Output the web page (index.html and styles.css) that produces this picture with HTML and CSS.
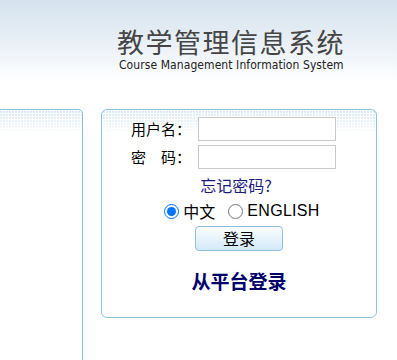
FILE: index.html
```html
<!DOCTYPE html>
<html lang="zh-CN">
<head>
<meta charset="utf-8">
<title>教学管理信息系统</title>
<link rel="stylesheet" href="styles.css">
</head>
<body>
<div class="page">
  <header class="top">
    <div class="brand">
      <div class="brand-cn">教学管理信息系统</div>
      <div class="brand-en">Course Management Information System</div>
    </div>
  </header>
  <main class="main">
    <div class="side"></div>
    <section class="login">
      <div class="fields">
        <label class="lbl">用户名：</label><input class="txt" type="text">
        <label class="lbl">密　码：</label><input class="txt" type="password">
      </div>
      <a class="forgot" href="#">忘记密码?</a>
      <div class="langs">
        <label class="lang"><input class="radio" type="radio" name="lang" checked>中文</label>
        <label class="lang"><input class="radio" type="radio" name="lang">ENGLISH</label>
      </div>
      <button class="btn" type="button">登录</button>
      <div class="platform">从平台登录</div>
    </section>
  </main>
</div>
</body>
</html>
```
FILE: styles.css
```css
html, body {
  margin: 0;
  padding: 0;
  background: #fff;
}
body {
  font-family: "Noto Sans CJK SC", "Liberation Sans", sans-serif;
  color: #000;
}
.page {
  width: 397px;
  height: 360px;
  overflow: hidden;
}
.top {
  height: 109px;
  box-sizing: border-box;
  padding: 26px 0 0 117px;
  background: linear-gradient(to bottom, #d5e3ee 0%, #e9f0f6 40%, #ffffff 75%);
}
.brand-cn {
  font-size: 27px;
  line-height: 31px;
  letter-spacing: 1.5px;
  color: #454545;
  white-space: nowrap;
}
.brand-en {
  font-family: "DejaVu Sans Condensed", "Liberation Sans", sans-serif;
  font-size: 12px;
  line-height: 14px;
  letter-spacing: 0.08px;
  color: #222;
  margin-top: 1px;
  margin-left: 2px;
  white-space: nowrap;
}
.main {
  display: flex;
  align-items: flex-start;
}
.side, .login {
  background:
    linear-gradient(to bottom, rgba(255,255,255,0) 0%, rgba(255,255,255,0.35) 35%, #fff 100%) 0 0 / 100% 24px no-repeat,
    repeating-linear-gradient(90deg, #fff 0 1px, transparent 1px 3px) 0 0 / 100% 24px no-repeat,
    repeating-linear-gradient(180deg, #fff 0 1px, transparent 1px 3px) 0 0 / 100% 24px no-repeat,
    linear-gradient(#d3eaf6, #d3eaf6) 0 0 / 100% 24px no-repeat,
    #fff;
}
.side {
  width: 93px;
  height: 260px;
  margin-left: -10px;
  box-sizing: border-box;
  border-top: 1px solid #86c6de;
  border-right: 1px solid #7ec3dd;
  border-top-right-radius: 5px;
}
.login {
  width: 276px;
  height: 209px;
  margin-left: 18px;
  box-sizing: border-box;
  border: 1px solid #8dc6dc;
  border-radius: 6px;
  display: flex;
  flex-direction: column;
  align-items: center;
  padding-top: 7px;
}
.fields {
  align-self: flex-start;
  margin-left: 29px;
  display: grid;
  grid-template-columns: 67px 138px;
  row-gap: 4px;
}
.lbl {
  font-size: 15px;
  line-height: 24px;
  white-space: nowrap;
}
.txt {
  width: 138px;
  height: 24px;
  box-sizing: border-box;
  margin: 0;
  padding: 0 3px;
  border: 1px solid #c9c9c9;
  background: #fff;
}
.forgot {
  margin-top: 6px;
  margin-left: -6px;
  font-size: 16px;
  line-height: 20px;
  color: #1d1a7c;
  text-decoration: none;
}
.langs {
  display: flex;
  align-items: center;
  gap: 13px;
  margin-top: 6px;
  margin-left: 6px;
  font-size: 16px;
  line-height: 20px;
}
.lang {
  display: flex;
  align-items: center;
}
.lang:last-child {
  font-family: "Liberation Sans", sans-serif;
  letter-spacing: 0.3px;
}
.radio {
  width: 15px;
  height: 15px;
  margin: 0 4px 0 0;
}
.btn {
  margin-top: 5px;
  width: 88px;
  height: 25px;
  box-sizing: border-box;
  padding: 0;
  border: 1px solid #93bedb;
  border-radius: 4px;
  background: linear-gradient(to bottom, #fbfdff 0%, #e8f4fc 45%, #d3e9f9 100%);
  font-family: "Noto Sans CJK SC", sans-serif;
  font-size: 16px;
  line-height: 23px;
  color: #000;
}
.platform {
  margin-top: 18px;
  font-size: 19px;
  line-height: 24px;
  font-weight: bold;
  color: #00006b;
}
```
